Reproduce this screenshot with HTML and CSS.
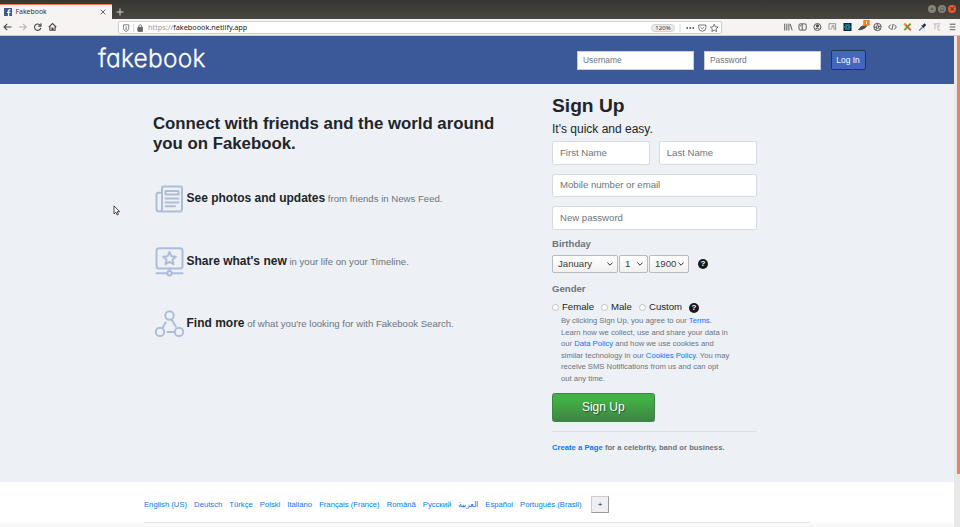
FILE: index.html
```html
<!DOCTYPE html>
<html lang="en">
<head>
<meta charset="utf-8">
<title>Fakebook</title>
<link rel="stylesheet" href="styles.css">
</head>
<body>
<div class="titlebar">
  <div class="tab">
    <svg class="favicon" viewBox="0 0 8 8"><rect width="8" height="8" fill="#3b5998"/><path d="M5.2 8V4.9h1.1l.2-1.2H5.2V3q0-.7.7-.7h.7V1.2H5.4Q3.9 1.2 3.9 2.800v.9H3v1.200h.9V8z" fill="#fff"/></svg>
    <span class="tab-name">Fakebook</span>
    <svg class="tab-close" viewBox="0 0 6 6"><path d="M.7.7l4.600 4.600M5.300.7L.7 5.300"/></svg>
  </div>
  <svg class="new-tab" viewBox="0 0 8 8"><path d="M4 .5v7M.5 4h7"/></svg>
  <div class="window-buttons">
    <span class="win">–</span><span class="win">▫</span><span class="win win-close">×</span>
  </div>
</div>
<div class="toolbar">
  <svg class="nav-icons" viewBox="0 0 60 16">
    <path d="M11.500 8H4.300M7.200 4.800L4 8l3.200 3.200"/>
    <path class="faded" d="M19 8h7M23 4.800L26.200 8 23 11.200"/>
    <path d="M40.300 6.300A3.200 3.200 0 1 0 40.800 9M41 4.300v2.800h-2.800"/>
    <path d="M48.700 8.200L52.500 4.600l3.800 3.600M49.900 7.600v3.700h5.200V7.600M52 11V9h1v2"/>
  </svg>
  <div class="address">
    <svg class="shield" viewBox="0 0 24 12"><path d="M4.500 2.800h5.200v3.400q0 2.200-2.600 3.400-2.600-1.200-2.600-3.400z"/><path d="M7.100 4.300v3.700"/><path class="thin" d="M14.700 2v8"/><rect class="lock" x="18.800" y="5.300" width="5" height="4.200" rx=".6"/><path d="M19.800 5.500V4q0-1.300 1.500-1.300T22.800 4v1.500"/></svg>
    <span class="url"><span class="scheme">https://</span>fakeboook.netlify.app</span>
    <span class="zoom-level">120%</span>
    <svg class="address-icons" viewBox="0 0 40 12"><path class="thin" d="M2 2v8"/><g class="dots"><circle cx="9.300" cy="6" r=".9"/><circle cx="12.300" cy="6" r=".9"/><circle cx="15.300" cy="6" r=".9"/></g><path d="M20.700 3h7.200v2.500q0 3.700-3.600 3.700t-3.600-3.700zM22.500 5.200l1.800 1.700 1.800-1.700"/><path d="M36.200 2.300l1.100 2.500 2.700.3-2 1.800.6 2.700-2.400-1.400-2.400 1.400.6-2.700-2-1.800 2.700-.3z"/></svg>
  </div>
  <svg class="extensions" viewBox="0 0 180 16">
    <path d="M4.700 4.700v6.800M6.800 4.700v6.800M8.900 4.700v6.800M10.200 4.900l2 6.500"/>
    <rect x="19" y="4.900" width="7.200" height="6.200" rx="1.200"/><path d="M22.200 5v6M20 6.800h1.200"/>
    <circle cx="37.400" cy="8" r="3.500"/><circle cx="37.400" cy="6.900" r="1.200" class="solid"/><path d="M35.300 10q2-1.500 4.200 0"/>
    <path class="grey" d="M49 4.700h6.600v6.600M49 4.700v6M50.200 10.800l1.800-2v-2h2v4.200"/>
    <rect x="63.500" y="4" width="8" height="8" fill="#0b2130" stroke="none"/><g class="react"><ellipse cx="67.500" cy="8" rx="3.300" ry="1.200"/><ellipse cx="67.500" cy="8" rx="3.300" ry="1.200" transform="rotate(60 67.500 8)"/><ellipse cx="67.500" cy="8" rx="3.300" ry="1.200" transform="rotate(120 67.500 8)"/></g>
    <path d="M78.500 10.500q3.500-4.800 8.300-4-1.500 3.700-7.500 4.300zM80.500 8h3" class="solid"/>
    <rect x="83.200" y="1" width="6.600" height="5.700" rx=".8" fill="#f58220" stroke="none"/><path d="M86.500 2.300v2.800" stroke="#fff"/>
    <circle cx="97.500" cy="8" r="3.700"/><circle cx="97.500" cy="8" r="1.300"/><path d="M96.400 4.500l2 2.200M101 7l-2.700.7M100 10.700l-1.500-2M96 11.300l.5-2.500M94 8l2.300.2"/>
    <path d="M110.800 5.500L108.600 8l2.200 2.500M114.200 5.500l2.200 2.500-2.200 2.500M113.200 5l-1.400 6"/>
    <path d="M124.300 4.700l6.400 6.400" stroke="#d8572a" stroke-width="2"/><path d="M130.700 4.700l-6.400 6.400" stroke="#6c9a34" stroke-width="1.900"/><path d="M124.300 4.700l1.700 1.700" stroke="#e0a329" stroke-width="1.700"/>
    <path d="M139.200 11.500l3.800-3.800" stroke="#4a83c4" stroke-width="1.400"/><path d="M142.600 7.800l2.700-2.700" stroke="#233152" stroke-width="2.600"/><path d="M141.500 6.400l3 3"/>
    <path class="grey pale" d="M153.700 4.900h6.800M155 5v5.500M158 7v4h2.300M157 7h3"/>
    <path d="M169.700 5.200h5.700M169.700 8h5.700M169.700 10.700h5.700"/>
  </svg>
</div>
<div class="viewport">
  <div class="page">
    <header class="navbar">
      <div class="logo">fakebook</div>
      <form class="login">
        <input class="login-input" placeholder="Username">
        <input class="login-input" placeholder="Password">
        <button class="login-button" type="button">Log In</button>
      </form>
    </header>
    <main class="main">
      <section class="intro">
        <h1 class="headline">Connect with friends and the world around you on Fakebook.</h1>
        <div class="feature">
          <svg class="feature-icon" viewBox="0 0 34 34"><path d="M9 27.500h17.500q2.500 0 2.500-2.500V4.500q0-2-2-2H11q-2 0-2 2v4.300H5.500q-2 0-2 2v14.200q0 2.500 2.700 2.500T9 25V8.800"/><rect x="12.500" y="7" width="13" height="3.400"/><path d="M12.500 14.600h13M12.500 18.400h13M12.500 22.200h9.500"/></svg>
          <p class="feature-text"><strong>See photos and updates</strong> from friends in News Feed.</p>
        </div>
        <div class="feature">
          <svg class="feature-icon" viewBox="0 0 34 34"><rect x="3.500" y="1.200" width="26" height="20.200" rx="2.500"/><path d="M16.500 5l1.900 4.200 4.500.5-3.400 3 1 4.500-4-2.300-4 2.300 1-4.500-3.400-3 4.500-.5zM16.500 21.400V23.700M3.500 26.300h10.800M18.700 26.300h10.800"/><circle cx="16.500" cy="26.300" r="2.200"/></svg>
          <p class="feature-text"><strong>Share what's new</strong> in your life on your Timeline.</p>
        </div>
        <div class="feature">
          <svg class="feature-icon" viewBox="0 0 34 34"><circle cx="16.500" cy="6.500" r="4.200"/><circle cx="7" cy="22.900" r="4.200"/><circle cx="26" cy="22.900" r="4.200"/><path d="M12.600 13.500L9.800 18.500M18.800 11l4 6.500M14.500 22.900h6.500"/></svg>
          <p class="feature-text"><strong>Find more</strong> of what you're looking for with Fakebook Search.</p>
        </div>
      </section>
      <section class="signup">
        <h2 class="signup-title">Sign Up</h2>
        <p class="signup-sub">It's quick and easy.</p>
        <div class="name-row">
          <input class="field" placeholder="First Name">
          <input class="field" placeholder="Last Name">
        </div>
        <input class="field" placeholder="Mobile number or email">
        <input class="field" placeholder="New password">
        <p class="label">Birthday</p>
        <div class="birthday">
          <div class="select month">January<svg viewBox="0 0 6 4"><path d="M.4.6L3 3.200 5.600.6"/></svg></div>
          <div class="select day">1<svg viewBox="0 0 6 4"><path d="M.4.6L3 3.200 5.600.6"/></svg></div>
          <div class="select year">1900<svg viewBox="0 0 6 4"><path d="M.4.6L3 3.200 5.600.6"/></svg></div>
          <span class="help">?</span>
        </div>
        <p class="label gender-label">Gender</p>
        <div class="gender">
          <span class="radio"></span><span class="female">Female</span>
          <span class="radio"></span><span class="male">Male</span>
          <span class="radio"></span><span class="custom">Custom</span>
          <span class="help">?</span>
        </div>
        <p class="terms">By clicking Sign Up, you agree to our <a>Terms</a>.<br>Learn how we collect, use and share your data in<br>our <a>Data Policy</a> and how we use cookies and<br>similar technology in our <a>Cookies Policy</a>. You may<br>receive SMS Notifications from us and can opt<br>out any time.</p>
        <button class="signup-button" type="button">Sign Up</button>
        <p class="create"><a>Create a Page</a> for a celebrity, band or business.</p>
      </section>
    </main>
    <footer class="footer">
      <div class="languages">
        <a>English (US)</a><a>Deutsch</a><a>Türkçe</a><a>Polski</a><a>Italiano</a><a>Français (France)</a><a>Română</a><a>Русский</a><a class="arabic">العربية</a><a>Español</a><a>Português (Brasil)</a>
        <button class="more" type="button">+</button>
      </div>
    </footer>
  </div>
  <div class="scrollbar"><div class="thumb"></div></div>
</div>
<svg class="cursor" viewBox="0 0 8 11"><path d="M1 .9v8l1.900-1.700 1.200 2.800 1.300-.6-1.200-2.700h2.500z"/></svg>
</body>
</html>
```
FILE: styles.css
```css
* { box-sizing: border-box; }
body {
  margin: 0;
  width: 960px;
  height: 527px;
  overflow: hidden;
  display: flex;
  flex-direction: column;
  background: #edf0f5;
  color: #212529;
  font: 9.6px/1.5 "Liberation Sans", Arial, sans-serif;
}
h1, h2, p { margin: 0; }
svg { display: block; flex: none; fill: none; }
input, button { font-family: inherit; margin: 0; outline: 0; }
a { color: #007bff; }

.titlebar { display: flex; flex: none; height: 19px; background: linear-gradient(#373632, #474640); }
.tab {
  display: flex;
  align-items: center;
  width: 112px;
  height: 15px;
  margin-top: 4px;
  padding: 0 6px 0 4px;
  border-top: 1px solid #e9794e;
  background: #f5f4f2;
  font: 6.900px/1 "Noto Sans", sans-serif;
  color: #333;
}
.favicon { width: 8px; height: 8px; margin-right: 3.500px; }
.tab-name { flex: 1; }
.tab-close { width: 6px; height: 6px; stroke: #444; stroke-width: .8; }
.new-tab { width: 8px; height: 8px; margin: 8px 0 0 4px; stroke: #d6d4cd; stroke-width: 1; }
.window-buttons { display: flex; gap: 2px; margin: 5px 4px 0 auto; }
.win {
  width: 8px;
  height: 8px;
  border-radius: 50%;
  background: #85827b;
  color: #3c3b37;
  font: bold 7px/8px "DejaVu Sans", sans-serif;
  text-align: center;
}
.win-close { background: #ee5a29; }

.toolbar { display: flex; flex: none; height: 17px; background: #f5f4f2; border-bottom: 1px solid #c9cbd0; }
.nav-icons { width: 60px; height: 16px; stroke: #454545; stroke-width: 1.100; }
.nav-icons .faded { stroke: #b5b5b5; }
.address {
  display: flex;
  align-items: center;
  width: 604px;
  height: 13px;
  margin: 2px 0 0 58px;
  border: 1px solid #d0d0cf;
  border-radius: 2px;
  background: #fff;
  font: 7.300px/1 "Noto Sans", sans-serif;
}
.shield { width: 24px; height: 12px; stroke: #666; stroke-width: .8; }
.thin { stroke: #bbb; stroke-width: .6; }
.lock { fill: #666; }
.url { margin-left: 5px; flex: 1; color: #222; }
.scheme { color: #999; }
.zoom-level {
  width: 24px;
  height: 8px;
  margin-right: 3px;
  border: 1px solid #d2d2d4;
  border-radius: 4px;
  background: #ececee;
  font-size: 6px;
  line-height: 6px;
  text-align: center;
  color: #333;
}
.address-icons { width: 40px; height: 12px; margin-right: 3px; stroke: #555; stroke-width: .8; overflow: visible; }
.dots { fill: #555; stroke: none; }
.extensions { width: 180px; height: 16px; margin-left: 58px; stroke: #4c4c4c; stroke-width: .9; }
.extensions .solid { fill: #4c4c4c; }
.extensions .grey { stroke: #8a8a8a; }
.extensions .pale { stroke: #b3b3b3; }
.react { stroke: #2f9fc6; stroke-width: .6; }

.viewport { display: flex; height: 491px; }
.page { display: flex; flex-direction: column; width: 954px; }
.scrollbar { width: 6px; padding-left: 3px; background: #e8e8e8; }
.thumb { width: 3px; height: 438px; background: #ea835c; }

.navbar { display: flex; flex: none; height: 48px; background: #3b5998; }
.logo {
  width: 479px;
  padding-left: 98px;
  color: #fff;
  font: 300 24.500px/44px Inter, sans-serif;
  font-feature-settings: "cv11";
  letter-spacing: .2px;
  -webkit-text-stroke: .3px #fff;
}
.login { display: flex; align-items: flex-start; padding: 15px 0 0 98px; }
.login-input {
  width: 117px;
  height: 19px;
  margin-right: 10px;
  padding: 0 5px 1px;
  border: 1px solid #c9ced6;
  border-radius: 0;
  background: #fff;
  font-size: 8.4px;
}
.login-button {
  width: 35px;
  height: 20px;
  margin: -1px 0 0 -.5px;
  padding: 0 0 1px;
  border: 1px solid #26344f;
  border-radius: 2px;
  background: #4267bd;
  color: #fff;
  font-size: 8.4px;
}
::placeholder { color: #6c757d; opacity: 1; }

.main { display: flex; flex: none; height: 397.5px; background: #edf0f5; }
.intro { width: 552px; padding: 30px 0 0 153px; }
.headline { width: 360px; height: 69px; font-size: 16.8px; line-height: 20.2px; }
.feature { display: flex; height: 62.600px; }
.feature-icon {
  width: 34px;
  height: 34px;
  margin-top: 1px;
  margin-right: -.5px;
  stroke: #adbdd9;
  stroke-width: 2;
  stroke-linecap: round;
  stroke-linejoin: round;
}
.feature-text { padding-top: 6px; color: #6c757d; white-space: nowrap; line-height: 18px; }
.feature-text strong { font-size: 12px; color: #212529; }

.signup { width: 204.500px; padding-top: 10px; }
.signup-title { font-size: 19.2px; line-height: 23px; }
.signup-sub { height: 24px; padding-top: 5px; font-size: 12px; line-height: 14.400px; }
.name-row { display: flex; gap: 9px; }
.name-row .field { flex: 1; min-width: 0; }
.field {
  display: block;
  width: 100%;
  height: 23.500px;
  margin-bottom: 9px;
  padding: 0 7px 1px;
  border: 1px solid #d5dae0;
  border-radius: 2.400px;
  background: #fff;
  font-size: 9.6px;
}
.label { margin-top: -1.500px; font-weight: bold; color: #6c757d; line-height: 14px; height: 18px; }
.birthday { display: flex; align-items: center; height: 18px; gap: 1px; }
.select {
  display: flex;
  align-items: center;
  justify-content: space-between;
  height: 18px;
  padding: 0 4px 0 5px;
  border: 1px solid #b9bbbe;
  border-radius: 2px;
  background: linear-gradient(#fff, #f1f0ef);
  color: #3a3a3a;
}
.select svg { width: 6px; height: 4px; stroke: #333; stroke-width: 1; }
.month { width: 66px; }
.day { width: 29px; }
.year { width: 40px; }
.help {
  flex: none;
  width: 10px;
  height: 10px;
  border-radius: 50%;
  background: #16191d;
  color: #fff;
  font-size: 8px;
  font-weight: bold;
  line-height: 10px;
  text-align: center;
}
.birthday .help { margin-left: 8px; }
.gender-label { margin-top: 8.500px; height: 16.500px; }
.gender { display: flex; align-items: center; height: 16px; margin-top: 1px; }
.radio { width: 7px; height: 7px; border: 1px solid #bfc1c4; border-radius: 50%; background: #fff; }
.female, .male, .custom { margin-left: 3px; }
.female { width: 39px; }
.male { width: 28px; }
.custom { width: 40px; }
.gender .help { margin-top: 1px; }
.terms { height: 77.500px; padding-left: 9px; color: #6c757d; font-size: 7.680px; line-height: 11.520px; white-space: nowrap; }
.signup-button {
  display: block;
  width: 102.500px;
  height: 29px;
  padding: 0;
  border: 1px solid #3b8640;
  border-radius: 2.400px;
  background: linear-gradient(#42b144 20%, #3f8344);
  color: #fff;
  font-size: 12px;
  text-shadow: 1px 1px 1px #23522a;
}
.create {
  margin-top: 9.500px;
  padding-top: 10px;
  border-top: 1px solid #dcdfe4;
  color: #6c757d;
  font-size: 7.680px;
  font-weight: bold;
  line-height: 12px;
  white-space: nowrap;
}
.footer { flex: 1; padding: 14px 144px 0; background: linear-gradient(#fff 85%, #f6f6f6); }
.languages {
  display: flex;
  align-items: center;
  gap: 7.050px;
  height: 27px;
  padding-bottom: 8px;
  border-bottom: 1px solid #e3e4e6;
  font-size: 7.680px;
  white-space: nowrap;
}
.more {
  width: 18px;
  height: 17px;
  margin-left: 2.500px;
  padding: 0;
  border: 1px solid #ccc;
  border-right: 1.500px solid #999;
  border-bottom: 1.500px solid #999;
  background: #efefef;
  color: #222;
  font-size: 8px;
}
.cursor { position: absolute; left: 113px; top: 205px; width: 8px; height: 11px; fill: #fff; stroke: #222; stroke-width: .8; }
```
